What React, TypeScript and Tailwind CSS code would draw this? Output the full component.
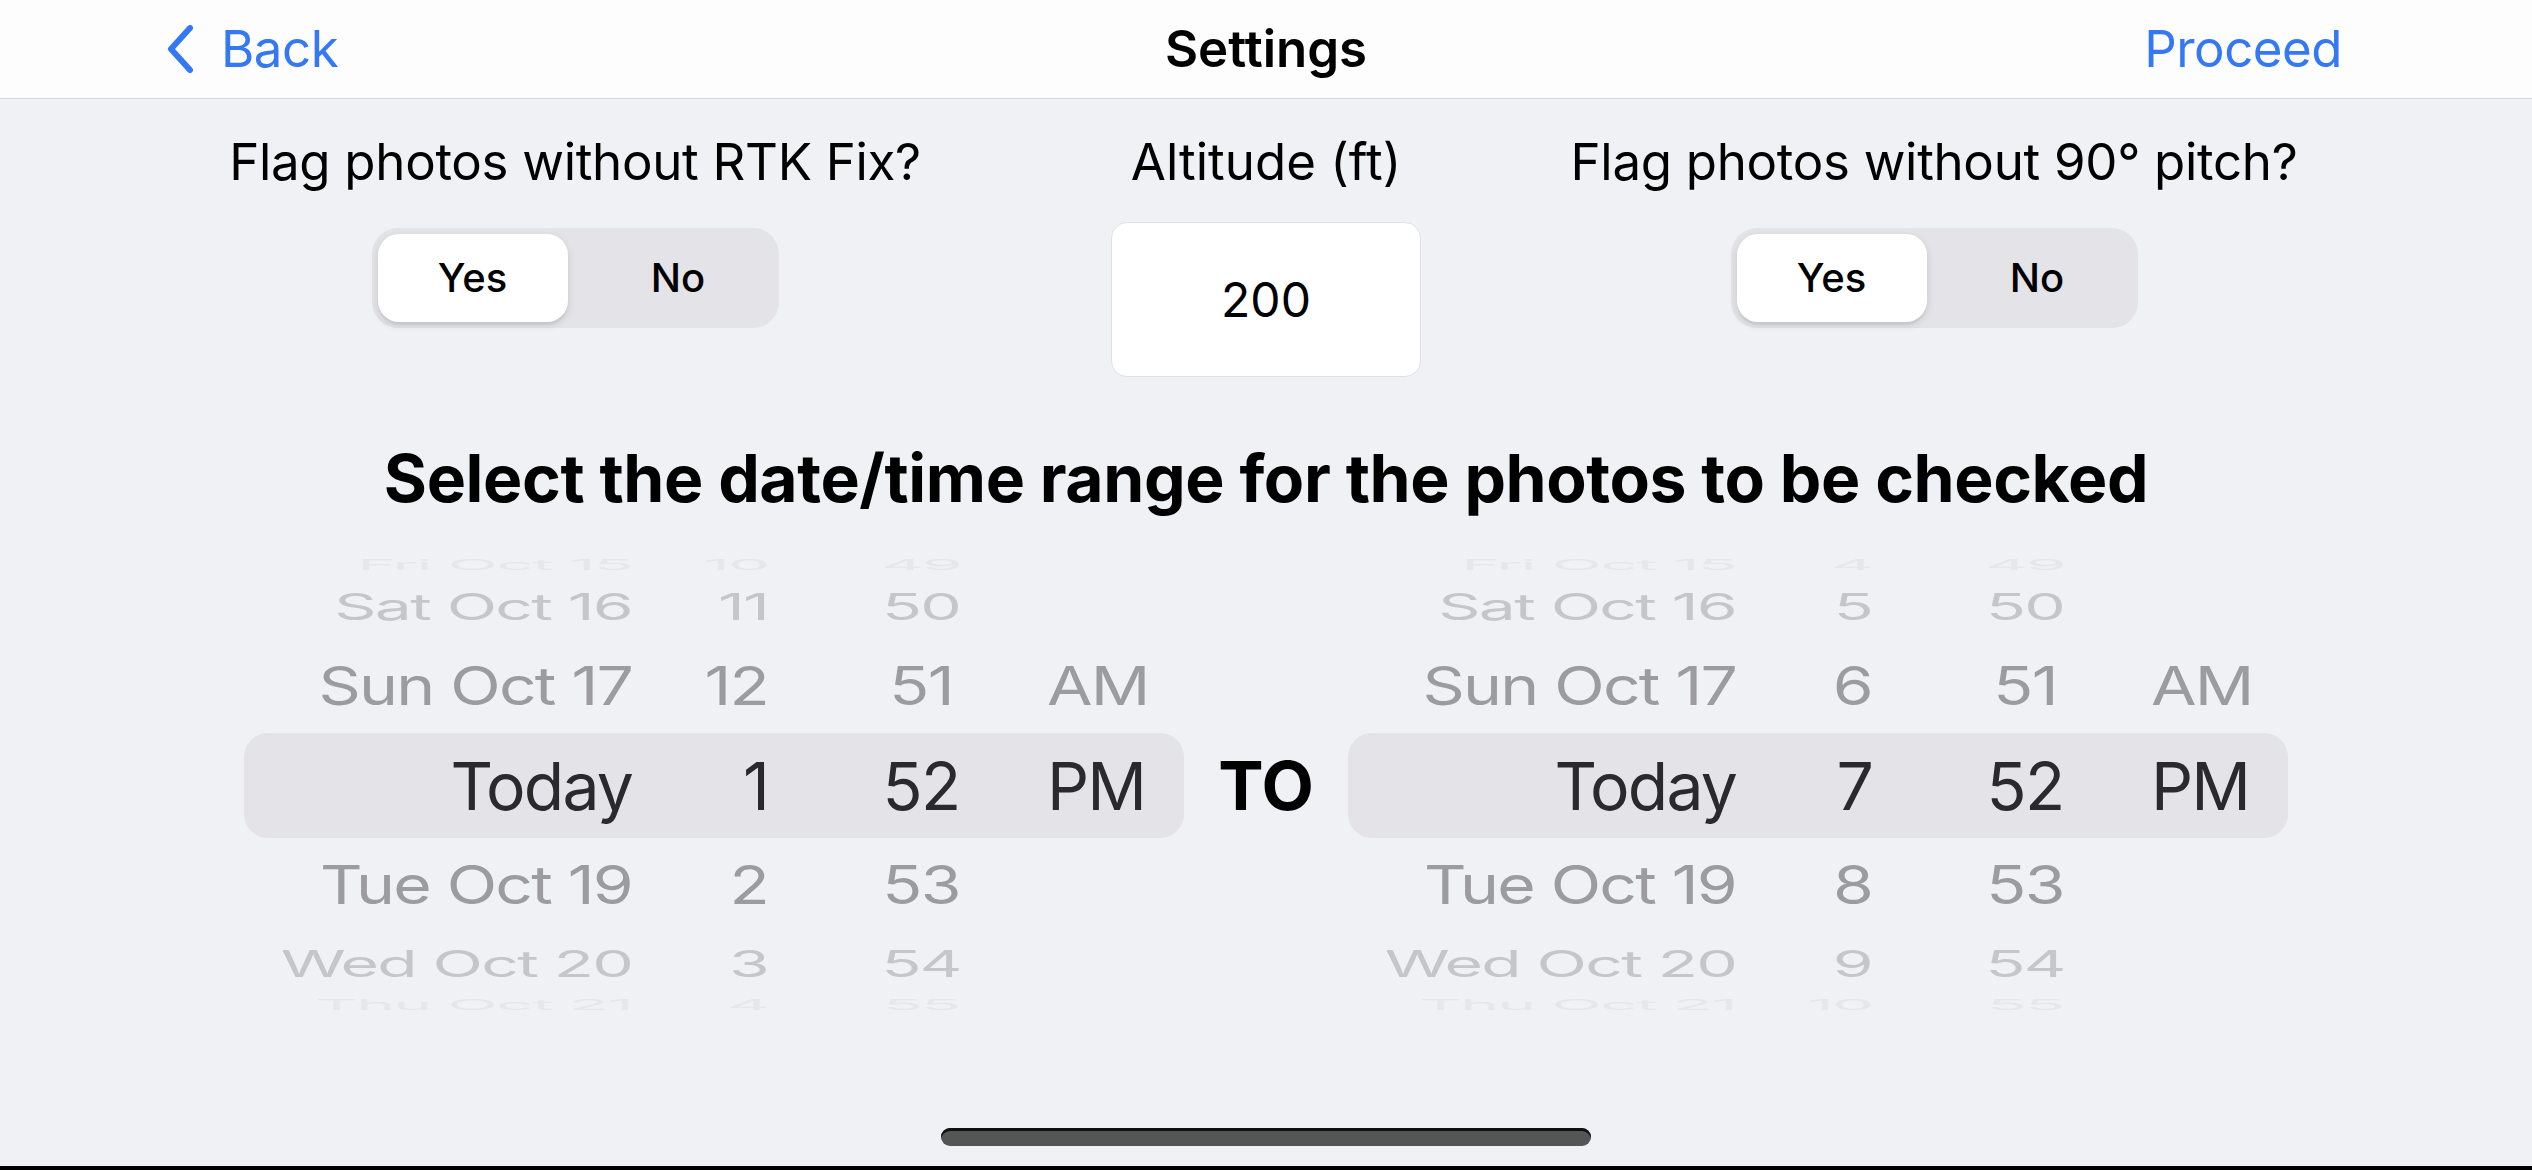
import React from "react";

type Row = {
  date: string;
  hour: string;
  min: string;
  ampm?: string;
  level: number; // distance from the selected row
};

const font = { fontFamily: "Inter, 'Noto Sans', sans-serif" };

const rowLook: Record<number, string> = {
  3: "h-[40px] scale-y-[0.22] text-[#e7e7eb]",
  2: "h-[40px] scale-y-[0.55] text-[#c6c6ca]",
  1: "h-[40px] scale-y-[0.8] text-[#9c9ca0]",
};

function PickerRow({ row }: { row: Row }) {
  const selected = row.level === 0;
  return (
    <div
      className={
        selected
          ? "flex h-[105px] items-center rounded-[24px] bg-[#e3e3e8] text-[#2a2a2c]"
          : "flex items-center " + rowLook[row.level]
      }
    >
      <div className="w-[388px] text-right leading-none">{row.date}</div>
      <div className="w-[136px] text-right leading-none">{row.hour}</div>
      <div className="ml-[60px] w-[186px] text-center leading-none">{row.min}</div>
      <div className="ml-[33px] leading-none">{row.ampm}</div>
    </div>
  );
}

function Picker({ hours }: { hours: string[] }) {
  const dates = ["Fri Oct 15", "Sat Oct 16", "Sun Oct 17", "Today", "Tue Oct 19", "Wed Oct 20", "Thu Oct 21"];
  const mins = ["49", "50", "51", "52", "53", "54", "55"];
  const rows: Row[] = dates.map((d, i) => ({
    date: d,
    hour: hours[i],
    min: mins[i],
    ampm: i === 2 ? "AM" : i === 3 ? "PM" : undefined,
    level: Math.abs(i - 3),
  }));
  return (
    <div className="flex w-[940px] flex-col text-[66px] tracking-[-1.8px]">
      <PickerRow row={rows[0]} />
      <div className="mt-[2px]">
        <PickerRow row={rows[1]} />
      </div>
      <div className="mt-[39px]">
        <PickerRow row={rows[2]} />
      </div>
      <div className="mt-[27px]">
        <PickerRow row={rows[3]} />
      </div>
      <div className="mt-[27px]">
        <PickerRow row={rows[4]} />
      </div>
      <div className="mt-[39px]">
        <PickerRow row={rows[5]} />
      </div>
      <div className="mt-[1px]">
        <PickerRow row={rows[6]} />
      </div>
    </div>
  );
}

function Segmented() {
  return (
    <div className="flex h-[100px] w-[407px] items-center rounded-[26px] bg-[#e3e3e8] p-[6px] text-[40px] font-medium text-black">
      <div className="flex h-full w-[190px] items-center justify-center rounded-[21px] bg-white shadow-[0_3px_8px_rgba(0,0,0,0.12),0_3px_1px_rgba(0,0,0,0.04)]">
        Yes
      </div>
      <div className="flex flex-1 items-center justify-center pl-[16px]">No</div>
    </div>
  );
}

export default function App() {
  return (
    <div className="flex h-[1170px] w-[2532px] flex-col bg-[#f0f1f5]" style={font}>
      {/* nav bar */}
      <div className="flex h-[99px] items-center border-b border-[#d6d6da] bg-[#fdfdfd] pl-[165px] pr-[190px] text-[51px]">
        <div className="flex w-[625px] items-center gap-[26px] text-[#3478f6]">
          <svg width="30" height="48" viewBox="0 0 30 48" fill="none">
            <path d="M25 3 L6 24 L25 45" stroke="#3478f6" strokeWidth="6" strokeLinecap="round" strokeLinejoin="round" />
          </svg>
          <span className="tracking-[-0.5px]">Back</span>
        </div>
        <div className="flex-1 text-center font-semibold text-black">Settings</div>
        <div className="w-[600px] text-right tracking-[-0.5px] text-[#3478f6]">Proceed</div>
      </div>

      {/* options */}
      <div className="flex pl-[225px] pt-[33px] text-[51px] text-black">
        <div className="flex w-[700px] flex-col items-center">
          <div className="whitespace-nowrap leading-[60px] tracking-[-0.3px]">Flag photos without RTK Fix?</div>
          <div className="mt-[36px]">
            <Segmented />
          </div>
        </div>
        <div className="ml-[186px] flex w-[310px] flex-col items-center">
          <div className="whitespace-nowrap leading-[60px]">Altitude (ft)</div>
          <div className="mt-[30px] flex h-[155px] w-[310px] items-center justify-center rounded-[16px] border border-[#e1e1e5] bg-white text-[48px]">
            200
          </div>
        </div>
        <div className="ml-[133px] flex w-[760px] flex-col items-center">
          <div className="whitespace-nowrap leading-[60px] tracking-[-0.3px]">Flag photos without 90° pitch?</div>
          <div className="mt-[36px]">
            <Segmented />
          </div>
        </div>
      </div>

      <div className="mt-[61px] text-center text-[66px] font-bold leading-[80px] tracking-[-0.4px] text-black">
        Select the date/time range for the photos to be checked
      </div>

      {/* pickers */}
      <div className="mt-[27px] flex items-center justify-center">
        <Picker hours={["10", "11", "12", "1", "2", "3", "4"]} />
        <div className="w-[164px] text-center text-[68px] font-bold text-black">TO</div>
        <Picker hours={["4", "5", "6", "7", "8", "9", "10"]} />
      </div>

      <div className="mt-[103px] h-[18px] w-[650px] self-center rounded-full bg-[#555555] shadow-[inset_0_3px_0_#111]" />
      <div className="mt-auto h-[4px] bg-black" />
    </div>
  );
}
